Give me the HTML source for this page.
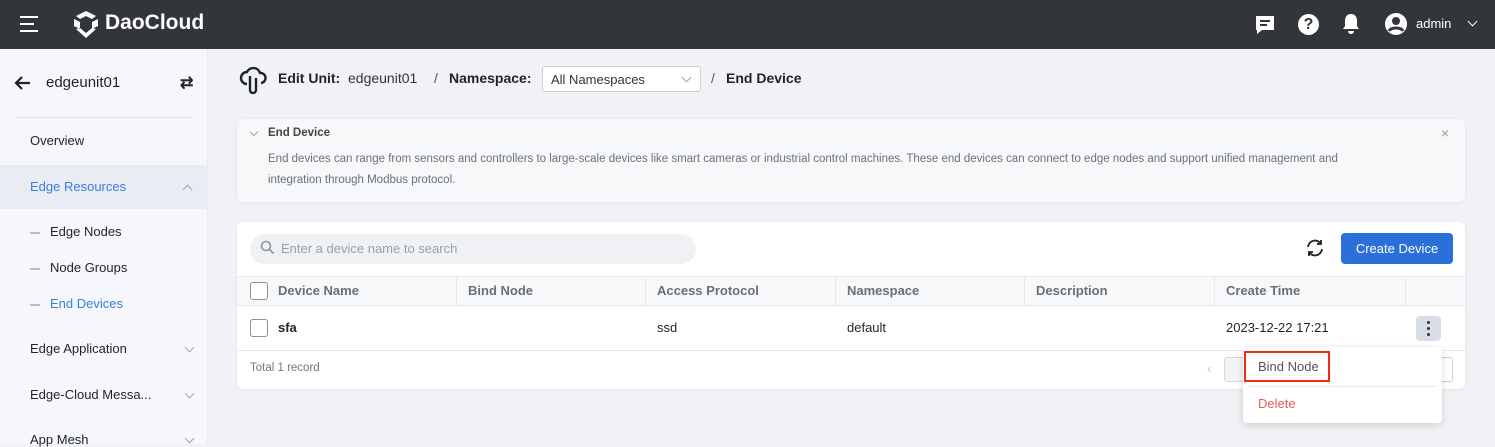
<!DOCTYPE html><html><head><style>
*{box-sizing:border-box;margin:0;padding:0}
body{width:1495px;height:444px;overflow:hidden;background:#f1f2f5;font-family:"Liberation Sans",sans-serif;color:#1f2329;position:relative;font-size:13px}
.abs{position:absolute}
.top{left:0;top:0;width:1495px;height:49px;background:#323539}
.side{left:0;top:49px;width:208px;height:395px;background:#f6f7fa;border-right:1px solid #e8eaee}
.card{background:#fff;border-radius:6px;box-shadow:0 1px 4px rgba(0,0,0,.06)}
.th{top:276px;height:30px;line-height:29px;color:#6a7078;font-weight:bold;font-size:13px}
.cb{width:18px;height:18px;border:1px solid #8a9099;border-radius:3px;background:#fff}
.chev{width:7px;height:7px;border-right:1.5px solid #a0a6ae;border-bottom:1.5px solid #a0a6ae}
.dot{width:3px;height:3px;border-radius:50%;background:#333;left:1427px}
</style></head><body>
<div class="abs top"></div>
<div class="abs" style="left:20px;top:16px;width:18px;height:2px;background:#fff"></div>
<div class="abs" style="left:20px;top:23px;width:14px;height:2px;background:#fff"></div>
<div class="abs" style="left:20px;top:30px;width:18px;height:2px;background:#fff"></div>
<svg class="abs" style="left:72px;top:10px" width="28" height="29" viewBox="0 0 28 29"><path d="M14 1L4 6l4 3 6-3 6 3 4-3z M2 9l6 3v7l-6-3z M26 9l-6 3v7l6-3z M4 19l10 9 10-9-4-1-6 5-6-5z" fill="#fff"/></svg>
<div class="abs" style="left:105px;top:11px;color:#fff;font-size:21px;font-weight:bold">DaoCloud</div>
<svg class="abs" style="left:1254px;top:14px" width="22" height="22" viewBox="0 0 22 22"><path d="M2 2h18v14H8l-5 4v-4H2z" fill="#fff"/><path d="M6 7h10M6 11h7" stroke="#323539" stroke-width="2"/></svg>
<div class="abs" style="left:1298px;top:14px;width:21px;height:21px;border-radius:50%;background:#fff;color:#323539;font-weight:bold;font-size:16px;text-align:center;line-height:21px">?</div>
<svg class="abs" style="left:1341px;top:13px" width="20" height="22" viewBox="0 0 20 22"><path d="M10 1c-4 0-6 3-6 7v5l-2 3h16l-2-3V8c0-4-2-7-6-7z M7 18a3 3 0 0 0 6 0z" fill="#fff"/></svg>
<svg class="abs" style="left:1384px;top:12px" width="24" height="24" viewBox="0 0 24 24"><circle cx="12" cy="12" r="11" fill="#fff"/><circle cx="12" cy="9" r="4" fill="#323539"/><path d="M5 19c2-4 12-4 14 0" stroke="#323539" stroke-width="3" fill="none"/></svg>
<div class="abs" style="left:1416px;top:16px;color:#fff;font-size:13px">admin</div>
<div class="abs chev" style="left:1469px;top:18px;border-color:#fff;transform:rotate(45deg)"></div>

<div class="abs side"></div>
<svg class="abs" style="left:13px;top:75px" width="18" height="16" viewBox="0 0 18 16"><path d="M17 8H3M9 2L3 8l6 6" stroke="#1f2329" stroke-width="2.2" fill="none"/></svg>
<div class="abs" style="left:46px;top:74px;font-size:15px">edgeunit01</div>
<div class="abs" style="left:180px;top:73px;font-size:16px;font-weight:bold">⇄</div>
<div class="abs" style="left:15px;top:117px;width:178px;height:1px;background:#e1e4e8"></div>
<div class="abs" style="left:30px;top:133px">Overview</div>
<div class="abs" style="left:0;top:165px;width:208px;height:44px;background:#e9ecf2"></div>
<div class="abs" style="left:30px;top:179px;color:#3a7ce0">Edge Resources</div>
<div class="abs chev" style="left:184px;top:186px;transform:rotate(-135deg)"></div>
<div class="abs" style="left:30px;top:232px;width:10px;height:1.5px;background:#b9bec6"></div>
<div class="abs" style="left:50px;top:224px">Edge Nodes</div>
<div class="abs" style="left:30px;top:268px;width:10px;height:1.5px;background:#b9bec6"></div>
<div class="abs" style="left:50px;top:260px">Node Groups</div>
<div class="abs" style="left:30px;top:304px;width:10px;height:1.5px;background:#b9bec6"></div>
<div class="abs" style="left:50px;top:296px;color:#3a7ce0">End Devices</div>
<div class="abs" style="left:30px;top:341px">Edge Application</div>
<div class="abs chev" style="left:186px;top:344px;transform:rotate(45deg)"></div>
<div class="abs" style="left:30px;top:387px">Edge-Cloud Messa...</div>
<div class="abs chev" style="left:186px;top:390px;transform:rotate(45deg)"></div>
<div class="abs" style="left:30px;top:432px">App Mesh</div>
<div class="abs chev" style="left:186px;top:435px;transform:rotate(45deg)"></div>

<svg class="abs" style="left:238px;top:64px" width="30" height="30" viewBox="0 0 30 30"><path d="M9 20a6 6 0 0 1 0-12 7 7 0 0 1 13 1 5 5 0 0 1 1 10 M12 12v14a3 3 0 0 0 6 0V14" stroke="#1f2329" stroke-width="2.4" fill="none"/></svg>
<div class="abs" style="left:278px;top:70px;font-size:14px;font-weight:bold">Edit Unit:</div>
<div class="abs" style="left:348px;top:70px;font-size:14px;color:#333">edgeunit01</div>
<div class="abs" style="left:434px;top:70px;font-size:14px;color:#555">/</div>
<div class="abs" style="left:449px;top:70px;font-size:14px;font-weight:bold">Namespace:</div>
<div class="abs" style="left:542px;top:66px;width:159px;height:26px;background:#fff;border:1px solid #c9ced6;border-radius:3px;padding:5px 8px;color:#333">All Namespaces</div>
<div class="abs chev" style="left:683px;top:74px;transform:rotate(45deg)"></div>
<div class="abs" style="left:711px;top:70px;font-size:14px;color:#555">/</div>
<div class="abs" style="left:726px;top:70px;font-size:14px;font-weight:bold">End Device</div>

<div class="abs card" style="left:237px;top:119px;width:1228px;height:83px;background:#f7f8fa"></div>
<div class="abs chev" style="left:251px;top:129px;transform:rotate(45deg);width:6px;height:6px"></div>
<div class="abs" style="left:268px;top:127px;font-size:11.5px;font-weight:bold;color:#444">End Device</div>
<div class="abs" style="left:1441px;top:125px;color:#999;font-size:14px">×</div>
<div class="abs" style="left:268px;top:149px;width:1125px;font-size:11.5px;line-height:21px;color:#6b717a">End devices can range from sensors and controllers to large-scale devices like smart cameras or industrial control machines. These end devices can connect to edge nodes and support unified management and integration through Modbus protocol.</div>

<div class="abs card" style="left:237px;top:222px;width:1228px;height:167px"></div>
<div class="abs" style="left:250px;top:234px;width:446px;height:30px;background:#eff1f5;border-radius:15px"></div>
<svg class="abs" style="left:260px;top:240px" width="15" height="15" viewBox="0 0 15 15"><circle cx="6" cy="6" r="4.5" stroke="#8f959e" stroke-width="1.6" fill="none"/><path d="M9.5 9.5l4 4" stroke="#8f959e" stroke-width="1.6"/></svg>
<div class="abs" style="left:281px;top:241px;color:#9aa0a8">Enter a device name to search</div>
<svg class="abs" style="left:1305px;top:238px" width="20" height="20" viewBox="0 0 20 20"><path d="M3 9a7 7 0 0 1 13-3M17 11a7 7 0 0 1-13 3" stroke="#1f2329" stroke-width="1.8" fill="none"/><path d="M16 2v4h-4M4 18v-4h4" stroke="#1f2329" stroke-width="1.8" fill="none"/></svg>
<div class="abs" style="left:1341px;top:233px;width:112px;height:31px;background:#2b6fd9;border-radius:4px;color:#fff;text-align:center;line-height:31px">Create Device</div>
<div class="abs" style="left:237px;top:276px;width:1228px;height:30px;background:#f7f8fa;border-top:1px solid #e6e8ec;border-bottom:1px solid #e6e8ec"></div>
<div class="abs" style="left:456px;top:277px;width:1px;height:28px;background:#e6e8ec"></div>
<div class="abs" style="left:645px;top:277px;width:1px;height:28px;background:#e6e8ec"></div>
<div class="abs" style="left:835px;top:277px;width:1px;height:28px;background:#e6e8ec"></div>
<div class="abs" style="left:1024px;top:277px;width:1px;height:28px;background:#e6e8ec"></div>
<div class="abs" style="left:1214px;top:277px;width:1px;height:28px;background:#e6e8ec"></div>
<div class="abs" style="left:1405px;top:277px;width:1px;height:28px;background:#e6e8ec"></div>
<div class="abs cb" style="left:250px;top:282px"></div>
<div class="abs th" style="left:278px">Device Name</div>
<div class="abs th" style="left:468px">Bind Node</div>
<div class="abs th" style="left:657px">Access Protocol</div>
<div class="abs th" style="left:847px">Namespace</div>
<div class="abs th" style="left:1036px">Description</div>
<div class="abs th" style="left:1226px">Create Time</div>
<div class="abs cb" style="left:250px;top:319px"></div>
<div class="abs" style="left:278px;top:320px;font-weight:bold">sfa</div>
<div class="abs" style="left:657px;top:320px">ssd</div>
<div class="abs" style="left:847px;top:320px">default</div>
<div class="abs" style="left:1226px;top:320px">2023-12-22 17:21</div>
<div class="abs" style="left:1416px;top:316px;width:25px;height:25px;background:#d9dde5;border-radius:4px"></div>
<div class="abs dot" style="top:321px"></div>
<div class="abs dot" style="top:327px"></div>
<div class="abs dot" style="top:333px"></div>
<div class="abs" style="left:237px;top:350px;width:1228px;height:1px;background:#e6e8ec"></div>
<div class="abs" style="left:250px;top:362px;font-size:11.5px;color:#777">Total 1 record</div>
<div class="abs" style="left:1207px;top:360px;color:#ccc;font-size:14px">‹</div>
<div class="abs" style="left:1224px;top:357px;width:30px;height:25px;background:#f3f4f6;border:1px solid #d4d7dd;border-radius:3px"></div>
<div class="abs" style="left:1430px;top:357px;width:23px;height:25px;border:1px solid #c9ced6;border-radius:3px"></div>

<div class="abs" style="left:1243px;top:347px;width:199px;height:76px;background:#fff;border-radius:4px;box-shadow:0 2px 8px rgba(0,0,0,.15)"></div>
<div class="abs" style="left:1244px;top:351px;width:86px;height:31px;border:2.5px solid #f52a0f"></div>
<div class="abs" style="left:1258px;top:359px;color:#555">Bind Node</div>
<div class="abs" style="left:1248px;top:386px;width:189px;height:1px;background:#e8eaee"></div>
<div class="abs" style="left:1258px;top:396px;color:#e85a5a">Delete</div>
</body></html>
